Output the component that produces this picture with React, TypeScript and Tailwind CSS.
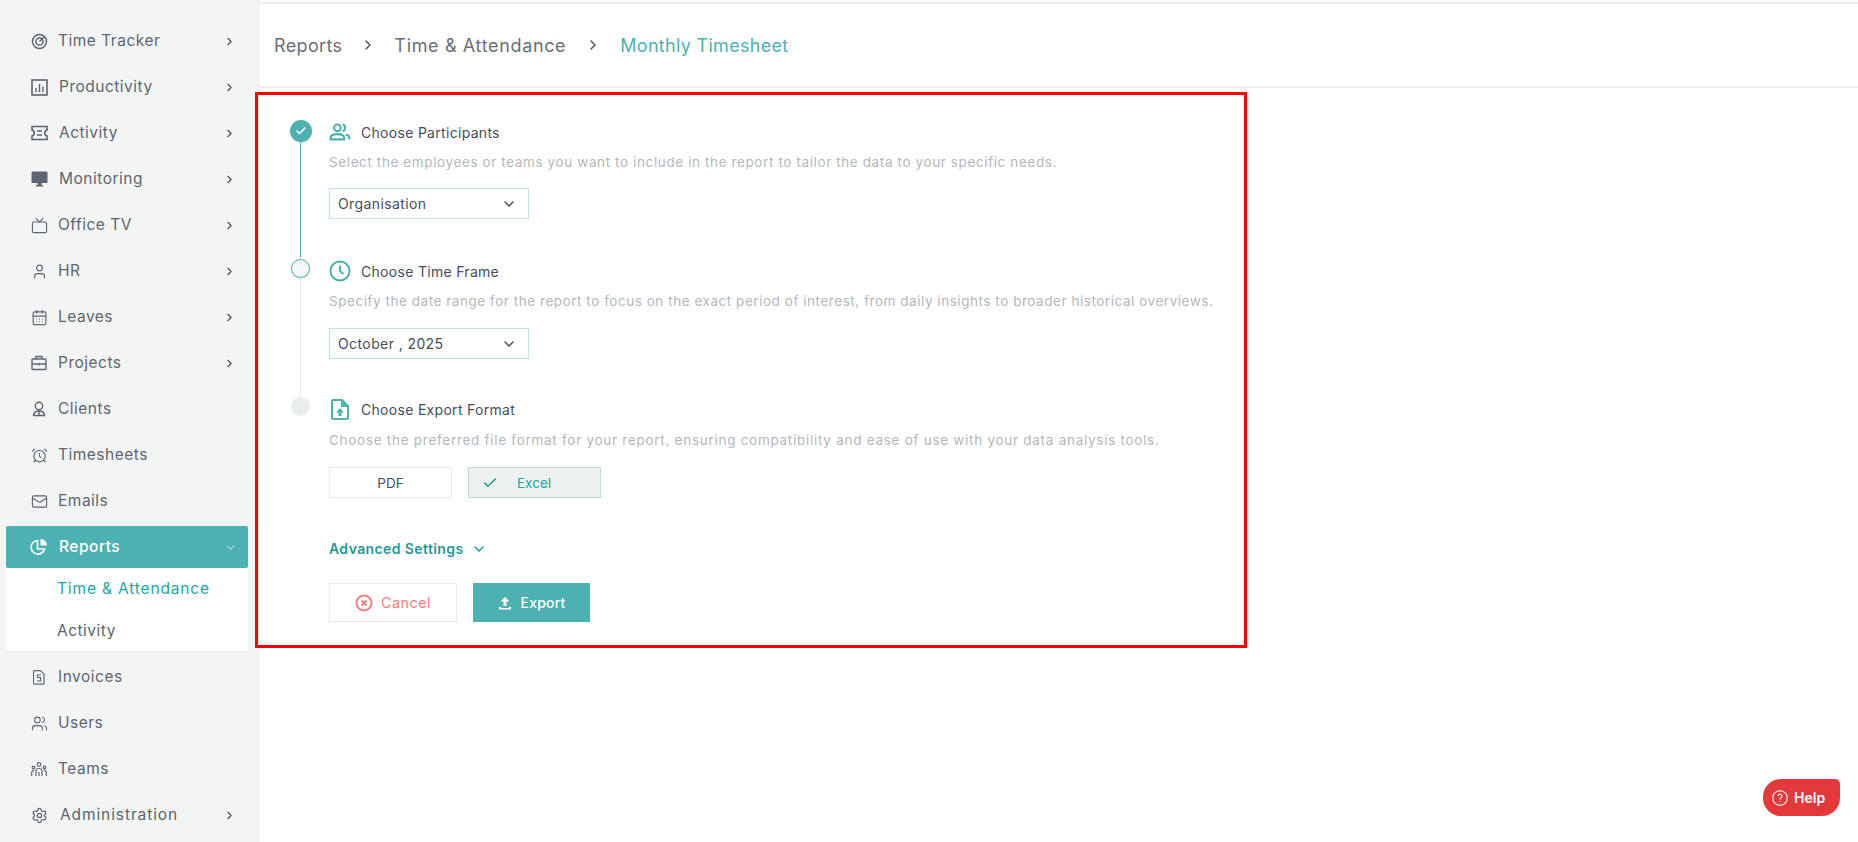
import { AlarmClock, CalendarDays, ChevronDown, ChevronRight, Check, Mail, Settings, Tv, User, Users } from "lucide-react";

const font = "font-['Inter','Noto_Sans',sans-serif]";

function TrackerIcon() {
  return (
    <svg width="17" height="17" viewBox="0 0 17 17" fill="none" stroke="currentColor" strokeWidth="1.5">
      <circle cx="8.5" cy="8.5" r="7" />
      <circle cx="8.5" cy="8.5" r="3.6" />
      <path d="M8.5 8.5 13.5 3.5" />
    </svg>
  );
}

function BarsIcon() {
  return (
    <svg width="17" height="17" viewBox="0 0 17 17" fill="none" stroke="currentColor">
      <rect x="1" y="1" width="15" height="15" strokeWidth="1.6" />
      <path d="M5 13V9M8.5 13V5M12 13V7.5" strokeWidth="1.4" />
    </svg>
  );
}

function TicketIcon() {
  return (
    <svg width="17" height="16" viewBox="0 0 17 16" fill="none" stroke="currentColor" strokeWidth="1.6">
      <path d="M1 1.5h15v3.6a3 3 0 0 0 0 5.8v3.6H1v-3.6a3 3 0 0 0 0-5.8z" />
      <path d="M6 6h5M6 10h5" />
    </svg>
  );
}

function MonitorIcon() {
  return (
    <svg width="17" height="16" viewBox="0 0 17 16" fill="currentColor">
      <path d="M1.5 0.5h14a1 1 0 0 1 1 1v9.5a1 1 0 0 1-1 1h-14a1 1 0 0 1-1-1V1.500a1 1 0 0 1 1-1z" />
      <path d="M6.500 12h4v2h1.500v1.500H5V14h1.500z" />
    </svg>
  );
}

function BriefcaseIcon() {
  return (
    <svg width="16" height="16" viewBox="0 0 16 16" fill="none" stroke="currentColor" strokeWidth="1.4">
      <rect x="1" y="4" width="14" height="10.500" rx="0.800" />
      <path d="M5 4V1.500h6V4M1 9h14M8 8v2.500" />
    </svg>
  );
}

function ClientIcon() {
  return (
    <svg width="14" height="16" viewBox="0 0 14 16" fill="none" stroke="currentColor" strokeWidth="1.4">
      <circle cx="7" cy="5" r="3.700" />
      <path d="M1.500 14.500c0-3 2.200-4.500 5.500-4.500s5.500 1.500 5.500 4.500z" />
      <path d="M7 10v4" />
    </svg>
  );
}

function PieIcon() {
  return (
    <svg width="18" height="18" viewBox="0 0 18 18" fill="none" stroke="currentColor" strokeWidth="1.6">
      <path d="M7.500 2.500a6.800 6.800 0 1 0 7 8.500H7.500z" />
      <path d="M10.500 1v6.500H17A6.500 6.500 0 0 0 10.500 1z" fill="currentColor" stroke="none" />
    </svg>
  );
}

function InvoiceIcon() {
  return (
    <svg width="12" height="15" viewBox="0 0 12 15" fill="none" stroke="currentColor" strokeWidth="1.200">
      <path d="M1.500 0.700h6L11 4.200v9a1 1 0 0 1-1 1H1.500a1 1 0 0 1-1-1v-11.500a1 1 0 0 1 1-1z" />
      <path d="M8 5H4.500v2.500H7.500V11H4" />
    </svg>
  );
}

function TeamIcon() {
  return (
    <svg width="16" height="15" viewBox="0 0 16 15" fill="none" stroke="currentColor" strokeWidth="1.200">
      <circle cx="8" cy="2.500" r="1.800" />
      <circle cx="2.500" cy="5.500" r="1.300" />
      <circle cx="13.500" cy="5.500" r="1.300" />
      <path d="M5 14V8.500a3 2 0 0 1 6 0V14M8 10v4M0.700 14v-3.500a2 2 0 0 1 2.300-2M15.300 14v-3.500a2 2 0 0 0-2.300-2" />
    </svg>
  );
}

function ParticipantsIcon() {
  return (
    <svg width="22" height="20" viewBox="0 0 21 19" fill="none" stroke="#4db1b1" strokeWidth="2">
      <circle cx="8" cy="5.500" r="3.200" />
      <path d="M1.500 16.500v-1.500c0-2.500 3-3.500 6.500-3.500s6.500 1 6.500 3.500v1.500z" />
      <path d="M13 2.400a3.200 3.200 0 0 1 0 6.200M16 11.800c2 .6 3.500 1.600 3.500 3.200v1.500" />
    </svg>
  );
}

function NavItem({ icon, label, arrow = true, textClass = "ml-[10px] tracking-[0.5px]" }: any) {
  return (
    <div className="flex h-[46px] items-center pl-[30px] pr-[22px] text-[#5d6570]">
      <span className="flex w-[18px] shrink-0 justify-center">{icon}</span>
      <span className={"flex-1 text-[15.5px] " + textClass}>{label}</span>
      {arrow && <ChevronRight size={13} strokeWidth={2} className="text-[#454c55]" />}
    </div>
  );
}

function StepTitle({ icon, title }: any) {
  return (
    <div className="flex h-[24px] items-center">
      <span className="flex w-[22px] justify-center">{icon}</span>
      <span className="ml-[10px] text-[14px] tracking-[0.3px] text-[#454f5b]">{title}</span>
    </div>
  );
}

function SelectBox({ value }: any) {
  return (
    <div className="flex h-[31px] w-[200px] items-center justify-between border border-[#bfe3e5] pl-[8px] pr-[11px] text-[14px] tracking-[0.4px] text-[#454f5b]">
      {value}
      <ChevronDown size={16} strokeWidth={2.200} />
    </div>
  );
}

export default function App() {
  return (
    <div className={"relative flex h-[842px] w-[1858px] overflow-hidden bg-white " + font}>
      <aside className="flex w-[259px] shrink-0 flex-col border-r border-[#e9ecec] bg-[#f3f5f5] pt-[18px]">
        <NavItem icon={<TrackerIcon />} label="Time Tracker" />
        <NavItem icon={<BarsIcon />} label="Productivity" textClass="ml-[11px] tracking-[0.5px]" />
        <NavItem icon={<TicketIcon />} label="Activity" textClass="ml-[11px] tracking-[0.5px]" />
        <NavItem icon={<MonitorIcon />} label="Monitoring" textClass="ml-[11px] tracking-[0.5px]" />
        <NavItem icon={<Tv size={17} strokeWidth={1.600} />} label="Office TV" />
        <NavItem icon={<User size={17} strokeWidth={1.600} />} label="HR" />
        <NavItem icon={<CalendarDays size={17} strokeWidth={1.600} />} label="Leaves" />
        <NavItem icon={<BriefcaseIcon />} label="Projects" />
        <NavItem icon={<ClientIcon />} label="Clients" arrow={false} />
        <NavItem icon={<AlarmClock size={17} strokeWidth={1.600} />} label="Timesheets" arrow={false} />
        <NavItem icon={<Mail size={17} strokeWidth={1.600} />} label="Emails" arrow={false} />

        <div className="mx-[6px] mt-[2px] flex h-[42px] w-[242px] items-center rounded-[2px] bg-[#4db1b1] pl-[24px] pr-[11px] font-medium text-white">
          <span className="flex w-[18px] justify-center"><PieIcon /></span>
          <span className="ml-[11px] flex-1 text-[15.5px] tracking-[0.5px]">Reports</span>
          <ChevronDown size={13} strokeWidth={1.500} />
        </div>
        <div className="mx-[6px] h-[84px] w-[242px] border-b border-[#e9ecec] bg-white pl-[51px] text-[15.5px] tracking-[0.85px]">
          <div className="flex h-[41px] items-center text-[#23a5a5]">Time &amp; Attendance</div>
          <div className="flex h-[43px] items-center tracking-[0.5px] text-[#5d6570]">Activity</div>
        </div>

        <div className="mt-[2px]">
          <NavItem icon={<InvoiceIcon />} label="Invoices" arrow={false} />
          <NavItem icon={<Users size={17} strokeWidth={1.500} />} label="Users" arrow={false} />
          <NavItem icon={<TeamIcon />} label="Teams" arrow={false} />
          <NavItem icon={<Settings size={17} strokeWidth={1.800} />} label="Administration" textClass="ml-[12px] tracking-[0.9px]" />
        </div>
      </aside>

      <main className="flex-1">
        <div className="mt-[2px] h-[2px] bg-[#e9eded]" />
        <div className="flex h-[84px] items-center border-b-2 border-[#eef0f0] pl-[15px] text-[18px] text-[#6b6f76]">
          <span className="tracking-[0.35px]">Reports</span>
          <ChevronRight size={16} strokeWidth={2.200} className="mx-[18px] text-[#555]" />
          <span className="tracking-[0.65px]">Time &amp; Attendance</span>
          <ChevronRight size={16} strokeWidth={2.200} className="mx-[19px] text-[#555]" />
          <span className="tracking-[0.3px] text-[#4db1b1]">Monthly Timesheet</span>
        </div>

        <section className="ml-[-4px] mt-[4px] h-[556px] w-[992px] border-[3px] border-[#ff0000] pl-[31px] pt-[25px]">
          <div className="flex">
            <div className="flex w-[23px] flex-col items-center">
              <div className="flex size-[22px] shrink-0 items-center justify-center rounded-full bg-[#4db1b1] text-white shadow-sm">
                <Check size={12} strokeWidth={3} />
              </div>
              <div className="h-[116px] w-[1.5px] bg-[#4db1b1]" />
            </div>
            <div className="ml-[17px]">
              <StepTitle icon={<ParticipantsIcon />} title="Choose Participants" />
              <p className="mt-[8px] text-[13.5px] tracking-[0.61px] text-[#b5b7ba]">
                Select the employees or teams you want to include in the report to tailor the data to your specific needs.
              </p>
              <div className="mt-[16px]"><SelectBox value="Organisation" /></div>
            </div>
          </div>

          <div className="mt-[1px] flex">
            <div className="flex w-[23px] flex-col items-center">
              <div className="size-[19px] shrink-0 rounded-full border border-[#4db1b1] bg-[#f2f9f9] shadow-sm" />
              <div className="h-[120px] w-[1.5px] bg-[#e3e8e8]" />
            </div>
            <div className="ml-[17px]">
              <StepTitle
                icon={
                  <svg width="22" height="22" viewBox="0 0 22 22" fill="none" stroke="#4db1b1" strokeWidth="2">
                    <circle cx="11" cy="11" r="9.500" />
                    <path d="M11 5.500V11l3.500 3" />
                  </svg>
                }
                title="Choose Time Frame"
              />
              <p className="mt-[8px] text-[13.5px] tracking-[0.54px] text-[#b5b7ba]">
                Specify the date range for the report to focus on the exact period of interest, from daily insights to broader historical overviews.
              </p>
              <div className="mt-[17px]"><SelectBox value="October , 2025" /></div>
            </div>
          </div>

          <div className="-mt-[1px] flex">
            <div className="flex w-[23px] flex-col items-center">
              <div className="size-[19px] shrink-0 rounded-full bg-[#e9eded]" />
            </div>
            <div className="ml-[17px]">
              <StepTitle
                icon={
                  <svg width="18" height="21" viewBox="0 0 18 21" fill="none">
                    <path d="M2 1h9l6 6v12a1 1 0 0 1-1 1H2a1 1 0 0 1-1-1V2a1 1 0 0 1 1-1z" stroke="#4db1b1" strokeWidth="2" />
                    <path d="M10 1v7h7z" fill="#4db1b1" />
                    <path d="M9 9l4 4.500h-2.500V17h-3v-3.500H5z" fill="#4db1b1" />
                  </svg>
                }
                title="Choose Export Format"
              />
              <p className="mt-[9px] text-[13.5px] tracking-[0.72px] text-[#b5b7ba]">
                Choose the preferred file format for your report, ensuring compatibility and ease of use with your data analysis tools.
              </p>
              <div className="mt-[17px] flex gap-[16px] text-[13.5px]">
                <div className="flex h-[31px] w-[123px] items-center justify-center border border-[#e9eaea] text-[#454f5b]">PDF</div>
                <div className="flex h-[31px] w-[133px] items-center border border-[#bcdcdc] bg-[#ecf0f1] pl-[13px] text-[#23a5a5]">
                  <Check size={16} strokeWidth={2} className="text-[#178f8f]" />
                  <span className="ml-[19px]">Excel</span>
                </div>
              </div>
              <div className="mt-[40px] flex items-center text-[14px] font-semibold tracking-[0.4px] text-[#1f9a9a]">
                Advanced Settings
                <ChevronDown size={16} strokeWidth={2.200} className="ml-[7px]" />
              </div>
              <div className="mt-[24px] flex gap-[16px] text-[14.5px] tracking-[0.4px]">
                <div className="flex h-[39px] w-[128px] items-center justify-center gap-[8px] border border-[#e9eaea] text-[#f67e7e]">
                  <svg width="18" height="18" viewBox="0 0 18 18" fill="none" stroke="#f67e7e" strokeWidth="2">
                    <circle cx="9" cy="9" r="7.500" />
                    <path d="M6.500 6.500l5 5M11.500 6.500l-5 5" />
                  </svg>
                  Cancel
                </div>
                <div className="flex h-[39px] w-[117px] items-center justify-center gap-[9px] bg-[#4db1b1] text-[14px] font-medium tracking-[0.2px] text-white">
                  <svg width="14" height="14" viewBox="0 0 14 14" fill="white">
                    <path d="M7 1l4.500 4.500H8.500V10h-3V5.500H2.500zM1 11h2v1h8v-1h2v2.500H1z" />
                  </svg>
                  Export
                </div>
              </div>
            </div>
          </div>
        </section>
      </main>

      <button className="absolute left-[1763px] top-[779px] flex h-[37px] w-[77px] items-center gap-[6px] rounded-[18px] rounded-tr-[5px] bg-[#e5383b] pl-[9px] text-[14px] font-semibold text-white">
        <svg width="16" height="16" viewBox="0 0 16 16" fill="none" stroke="white" strokeWidth="1.100">
          <circle cx="8" cy="8" r="7.300" />
          <path d="M6 6.200a2 2 0 1 1 3.200 1.600c-.8.500-1.200 1-1.200 1.800M8 11v1" />
        </svg>
        Help
      </button>
    </div>
  );
}
